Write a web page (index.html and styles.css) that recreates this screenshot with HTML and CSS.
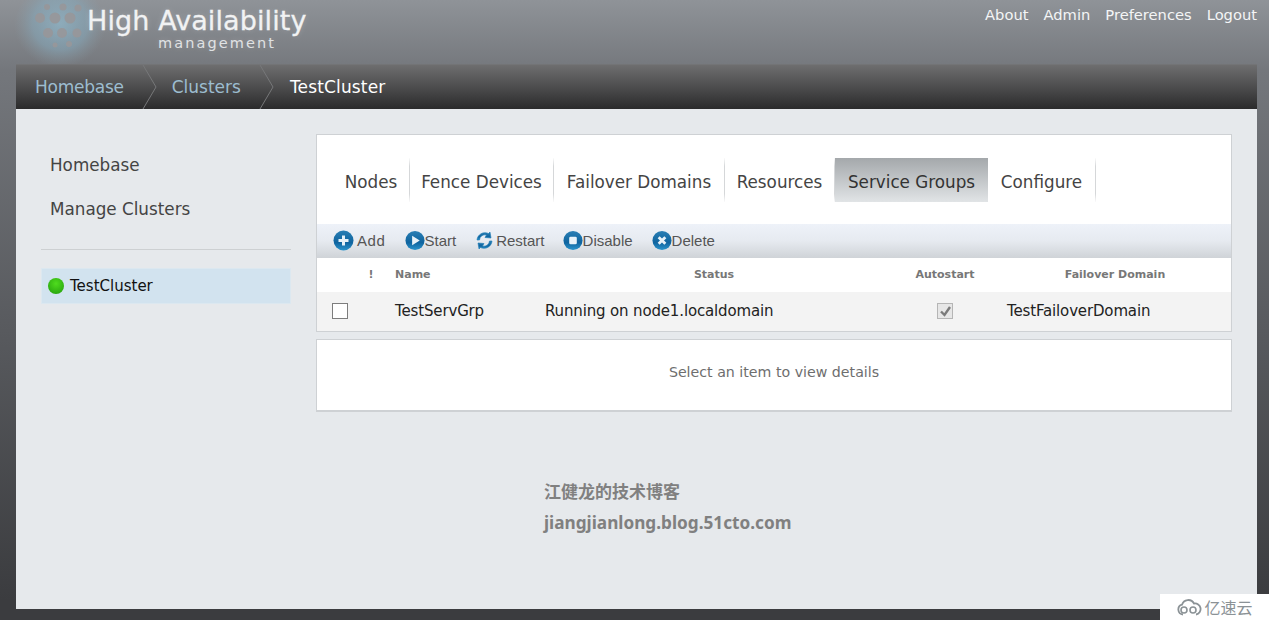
FILE: index.html
```html
<!DOCTYPE html>
<html>

<head>
  <meta charset="UTF-8">
  <title>High Availability Management</title>
  <link rel="stylesheet" href="styles.css">
</head>

<body>
  <header class="top">
    <div class="logo">
      <svg class="logo-mark" width="110" height="64" viewBox="0 0 110 64">
        <defs>
          <radialGradient id="glow" cx="50%" cy="45%" r="50%">
            <stop offset="0" stop-color="#8fb4c6" stop-opacity="0.8" />
            <stop offset="0.6" stop-color="#86a8ba" stop-opacity="0.55" />
            <stop offset="1" stop-color="#8a9aa4" stop-opacity="0" />
          </radialGradient>
          <linearGradient id="ball" x1="0" y1="0" x2="0" y2="1">
            <stop offset="0" stop-color="#2a7fb4" />
            <stop offset="0.6" stop-color="#0f649f" />
            <stop offset="1" stop-color="#2a94cc" />
          </linearGradient>
        </defs>
        <ellipse cx="60" cy="28" rx="46" ry="44" fill="url(#glow)" />
        <g fill="#98979a" opacity="0.9">
          <circle cx="47" cy="7" r="3" />
          <circle cx="63" cy="7" r="3.500" />
          <circle cx="78" cy="8" r="3.500" />
          <circle cx="40" cy="18" r="5" />
          <circle cx="55" cy="18" r="5.500" />
          <circle cx="70" cy="18" r="5.500" />
          <circle cx="48" cy="33" r="5" />
          <circle cx="62" cy="33" r="5" />
          <circle cx="77" cy="33" r="4.500" />
          <circle cx="55" cy="45" r="2.500" />
          <circle cx="69" cy="44" r="3" />
        </g>
      </svg>
      <div class="logo-text">
        <div class="logo-title">High Availability</div>
        <div class="logo-sub">management</div>
      </div>
    </div>
    <nav class="top-links">
      <a>About</a>
      <a>Admin</a>
      <a>Preferences</a>
      <a>Logout</a>
    </nav>
  </header>

  <div class="crumbs">
    <a class="crumb crumb-home">Homebase</a>
    <svg class="crumb-sep" width="18" height="44" viewBox="0 0 18 44"><path d="M1 0 L14 22 L1 44" fill="none" stroke="#77787a" /></svg>
    <a class="crumb">Clusters</a>
    <svg class="crumb-sep" width="18" height="44" viewBox="0 0 18 44"><path d="M1 0 L14 22 L1 44" fill="none" stroke="#77787a" /></svg>
    <span class="crumb current">TestCluster</span>
  </div>

  <div class="content">
    <aside class="side">
      <a class="side-link">Homebase</a>
      <a class="side-link">Manage Clusters</a>
      <hr class="side-rule">
      <div class="cluster">
        <span class="dot"></span>
        <span>TestCluster</span>
      </div>
    </aside>

    <main class="main">
      <section class="panel">
        <div class="tabs">
          <a class="tab">Nodes</a>
          <a class="tab">Fence Devices</a>
          <a class="tab">Failover Domains</a>
          <a class="tab">Resources</a>
          <a class="tab active">Service Groups</a>
          <a class="tab">Configure</a>
        </div>

        <div class="toolbar">
          <a class="tool tool-add">
            <svg width="21" height="21" viewBox="0 0 21 21"><circle class="ic-bg" cx="10.5" cy="10.5" r="10" /><path d="M10.5 5.500v10M5.500 10.500h10" stroke="#e8f2f8" stroke-width="3" /></svg>
            Add
          </a>
          <a class="tool tool-start">
            <svg width="20" height="21" viewBox="0 0 21 21"><circle class="ic-bg" cx="10.5" cy="10.5" r="10" /><path d="M7.500 5.500l8 5-8 5z" fill="#e8f2f8" /></svg>
            Start
          </a>
          <a class="tool tool-restart">
            <svg width="17" height="19" viewBox="0 0 17 19"><path d="M3.500 9a5.500 5.500 0 0 1 7-5L9 6.500l6 .5-1-6-1.500 1.500A8 8 0 0 0 1 9z" class="ic-bg ic-thick" /><path d="M13.500 10a5.500 5.500 0 0 1-7 5L8 12.500 2 12l1 6 1.500-1.500A8 8 0 0 0 16 10z" class="ic-bg ic-thick" /></svg>
            Restart
          </a>
          <a class="tool tool-disable">
            <svg width="20" height="21" viewBox="0 0 21 21"><circle class="ic-bg" cx="10.5" cy="10.5" r="10" /><rect x="6.500" y="6.500" width="8" height="8" rx="1.500" fill="#e8f2f8" /></svg>
            Disable
          </a>
          <a class="tool tool-delete">
            <svg width="20" height="21" viewBox="0 0 21 21"><circle class="ic-bg" cx="10.5" cy="10.5" r="10" /><path d="M7 7l7 7M14 7l-7 7" stroke="#e8f2f8" stroke-width="3" /></svg>
            Delete
          </a>
        </div>

        <div class="grid-row grid-head">
          <span></span>
          <span class="cell-center">!</span>
          <span class="cell-name">Name</span>
          <span class="cell-center">Status</span>
          <span class="cell-center">Autostart</span>
          <span class="cell-center">Failover Domain</span>
        </div>
        <div class="grid-row grid-item">
          <span class="check"></span>
          <span></span>
          <span class="cell-name">TestServGrp</span>
          <span>Running on node1.localdomain</span>
          <span class="cell-center"><span class="check checked"><svg width="13" height="13" viewBox="0 0 13 13"><path d="M2 6.500l3.500 3.500 5.500-8" fill="none" stroke="#7a7a7a" stroke-width="2.400" /></svg></span></span>
          <span>TestFailoverDomain</span>
        </div>
      </section>

      <section class="panel details">Select an item to view details</section>

      <div class="watermark">
        <div>江健龙的技术博客</div>
        <div class="watermark-url">jiangjianlong.blog.51cto.com</div>
      </div>
    </main>
  </div>

  <div class="badge">
    <svg width="26" height="17" viewBox="0 0 26 17">
      <path d="M7 15.500a5 5 0 0 1-1-9.800A6.500 6.500 0 0 1 18 4.500a5.500 5.500 0 0 1 2 11" fill="none" stroke="#8b9296" stroke-width="1.800" />
      <circle cx="8" cy="11" r="3" fill="none" stroke="#8b9296" stroke-width="1.600" />
      <circle cx="17" cy="11" r="3" fill="none" stroke="#8b9296" stroke-width="1.600" />
    </svg>
    <span>亿速云</span>
  </div>
</body>

</html>
```

FILE: styles.css
```css
html,
body {
  height: 620px;
  margin: 0;
  overflow: hidden;
}

body {
  position: relative;
  font-family: "DejaVu Sans", sans-serif;
  background: linear-gradient(#8f9398 0, #74777c 70px, #3b3c3f 600px);
}

a {
  cursor: pointer;
}

.top {
  display: flex;
  justify-content: space-between;
  height: 64px;
  padding: 0 12px 0 0;
}

.logo {
  display: flex;
}

.logo-mark {
  margin-right: -23px;
}

.logo-text {
  color: #f1f2f3;
  line-height: 1;
  text-shadow: 0 0 6px rgba(255, 255, 255, 0.2);
}

.logo-title {
  margin-top: 7px;
  font-size: 27px;
  letter-spacing: 0.1px;
  -webkit-text-stroke: 0.3px #f1f2f3;
}

.logo-sub {
  margin-top: 2px;
  padding-left: 71px;
  font-size: 14.500px;
  letter-spacing: 2.100px;
  color: #e0e2e4;
}

.top-links {
  display: flex;
  gap: 15px;
  padding-top: 6px;
  font-size: 14.700px;
  color: #f4f5f6;
}

.crumbs {
  display: flex;
  align-items: center;
  height: 45px;
  margin: 0 12px 0 16px;
  padding-left: 19px;
  background: linear-gradient(#6e6e6f, #5a5a5b 30%, #2b2b2c);
  border-top: 1px solid #737476;
  box-sizing: border-box;
  font-size: 17px;
}

.crumb {
  color: #9dbdd0;
}

.crumb-home {
  letter-spacing: -0.250px;
}

.crumb-sep {
  margin: 0 12px 0 18px;
}

.current {
  margin-left: 1px;
  color: #fff;
  letter-spacing: 0.150px;
}

.content {
  display: flex;
  height: 500px;
  margin: 0 12px 0 16px;
  background: #e6e9ec;
}

.side {
  display: flex;
  flex-direction: column;
  width: 250px;
  margin-left: 25px;
  padding-top: 43px;
}

.side-link {
  height: 44px;
  padding-left: 9px;
  font-size: 16.800px;
  line-height: 26px;
  color: #444;
}

.side-rule {
  width: 100%;
  margin: 9px 0 18px;
  border: 0;
  border-top: 1px solid #cdd0d2;
}

.cluster {
  display: flex;
  align-items: center;
  gap: 6px;
  height: 36px;
  padding-left: 6px;
  background: #d2e3ef;
  border: 1px solid #dce8f0;
  box-sizing: border-box;
  font-size: 15px;
  color: #111;
}

.dot {
  width: 16px;
  height: 16px;
  border-radius: 50%;
  background: radial-gradient(circle at 50% 35%, #4fdc1e, #2aa80f 80%);
}

.main {
  width: 916px;
  margin-left: 25px;
  padding-top: 25px;
}

.panel {
  background: #fff;
  border: 1px solid #ced1d4;
  box-sizing: border-box;
}

.tabs {
  display: grid;
  grid-template-columns: 77px 144px 171px 110px 153px 108px;
  height: 89px;
  padding: 23px 0 0 16px;
  box-sizing: border-box;
  font-size: 16.800px;
  color: #444;
}

.tab {
  height: 44px;
  border-right: 1px solid;
  border-image: linear-gradient(transparent, #d5d7d9 20%, #d5d7d9 80%, transparent) 1;
  box-sizing: border-box;
  line-height: 49px;
  text-align: center;
}

.tab.active {
  background: linear-gradient(#a4a8ab, #e1e4e6);
  border-right: 0;
  color: #333;
}

.toolbar {
  display: flex;
  align-items: center;
  height: 34px;
  padding: 0 0 2px 16px;
  box-sizing: border-box;
  background: linear-gradient(#eef2f9, #e6eaf0 50%, #cfd3d7);
  font-family: "Liberation Sans", Arial, sans-serif;
  font-size: 15px;
  color: #555;
}

.tool {
  display: flex;
  align-items: center;
}

.tool-add {
  gap: 3px;
  margin-right: 19px;
  letter-spacing: 0.600px;
}

.tool-start {
  margin-right: 20px;
}

.tool-restart {
  gap: 3px;
  margin-right: 18px;
}

.tool-disable {
  margin-right: 19px;
}

.ic-bg {
  fill: url(#ball);
}

.ic-thick {
  stroke: #1a78b4;
  stroke-width: 0.600;
}

.grid-row {
  display: grid;
  grid-template-columns: 43px 22px 163px 338px 124px 216px;
  align-items: center;
}

.grid-head {
  height: 34px;
  padding-bottom: 2px;
  box-sizing: border-box;
  font-size: 11px;
  font-weight: bold;
  color: #777;
}

.grid-item {
  height: 39px;
  padding-bottom: 2px;
  background: #f3f3f3;
  box-sizing: border-box;
  font-size: 15px;
  letter-spacing: -0.150px;
  color: #222;
}

.cell-center {
  text-align: center;
}

.cell-name {
  padding-left: 13px;
}

.check {
  display: inline-flex;
  align-items: center;
  justify-content: center;
  width: 16px;
  height: 16px;
  margin-left: 15px;
  background: #fff;
  border: 1px solid #7d7d7d;
  box-sizing: border-box;
  vertical-align: middle;
}

.checked {
  margin-left: 0;
  background: #e6e6e6;
  border-color: #b5b5b5;
}

.details {
  height: 73px;
  margin-top: 7px;
  border-bottom-width: 2px;
  font-size: 14.200px;
  line-height: 64px;
  text-align: center;
  color: #6e6e6e;
}

.watermark {
  margin: 64px 0 0 228px;
  font-family: "Noto Sans", "Noto Sans CJK SC", sans-serif;
  font-size: 17px;
  font-weight: bold;
  line-height: 31px;
  color: #808080;
}

.watermark-url {
  font-size: 17.200px;
}

.badge {
  position: absolute;
  right: 0;
  bottom: 0;
  display: flex;
  align-items: center;
  justify-content: center;
  gap: 2px;
  width: 109px;
  height: 26px;
  background: #fff;
  font-family: "Noto Sans CJK SC", sans-serif;
  font-size: 16px;
  color: #8b9296;
}
```
